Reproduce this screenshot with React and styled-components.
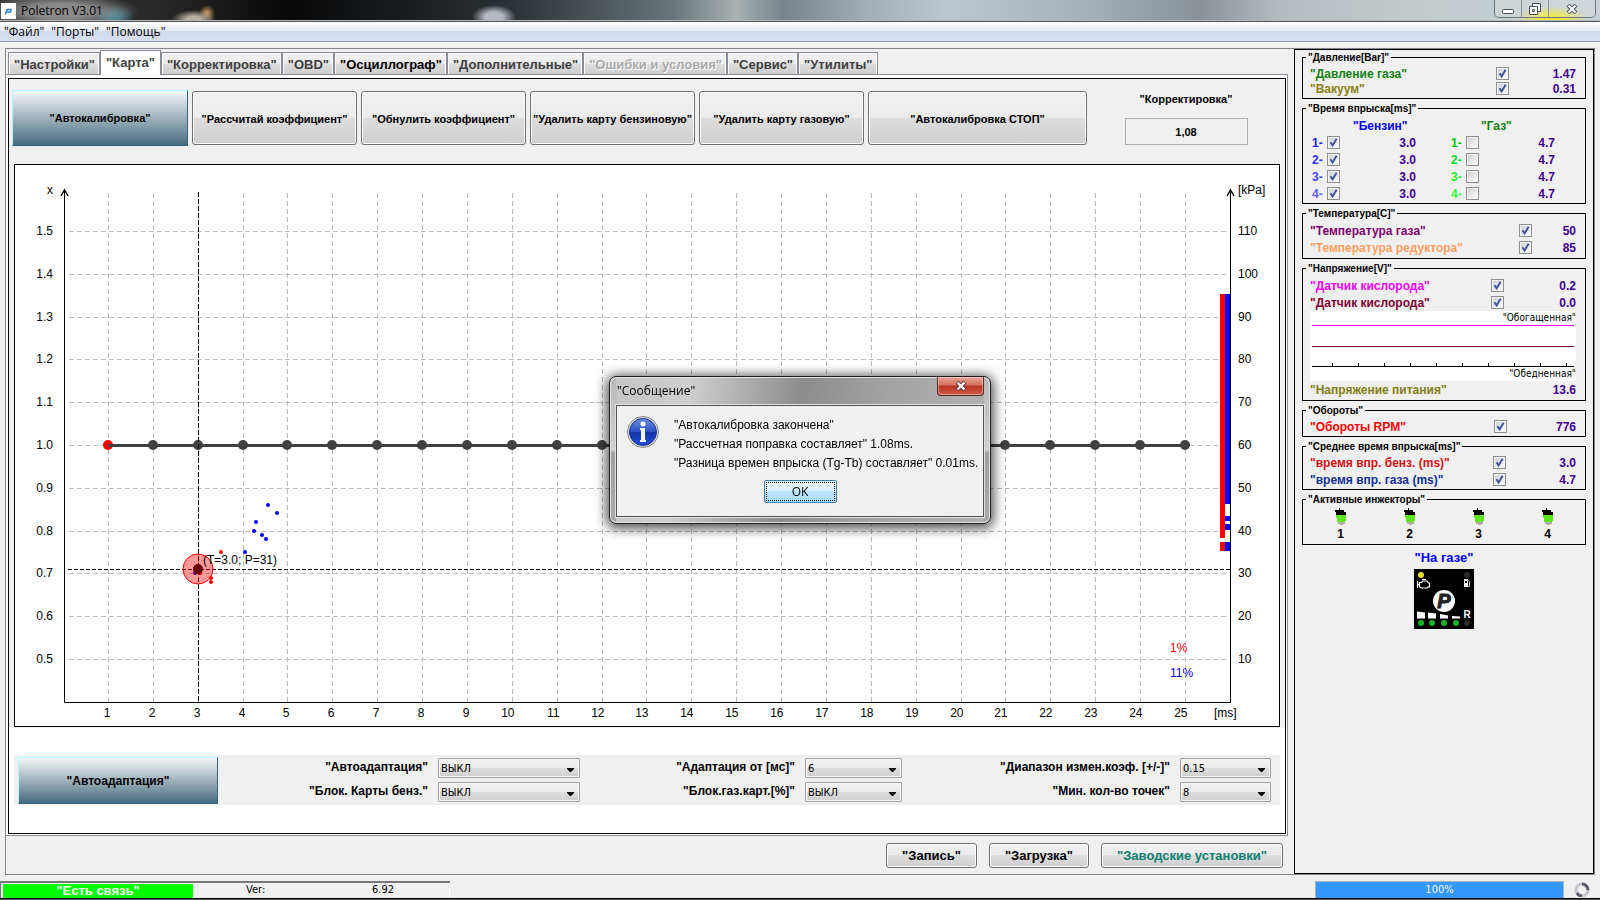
import React, { useState } from "react";
import styled, { createGlobalStyle, css } from "styled-components";

const UI_FONT = '"Liberation Sans", Arial, sans-serif';
const SYSTEM_FONT = '"Open Sans", "Noto Sans", sans-serif';
const TAHOMA = '"DejaVu Sans Condensed", "DejaVu Sans", sans-serif';

const tabs = [
  { title: "Настройки" },
  { title: "Карта", active: true },
  { title: "Корректировка" },
  { title: "OBD" },
  { title: "Осциллограф", strong: true },
  { title: "Дополнительные" },
  { title: "Ошибки и условия", disabled: true },
  { title: "Сервис" },
  { title: "Утилиты" },
];

const actions = [
  "Рассчитай коэффициент",
  "Обнулить коэффициент",
  "Удалить карту бензиновую",
  "Удалить карту газовую",
  "Автокалибровка СТОП",
];

const settings = [
  [
    { id: "adapt", label: "Автоадаптация", value: "ВЫКЛ" },
    { id: "lock-petrol", label: "Блок. Карты бенз.", value: "ВЫКЛ" },
  ],
  [
    { id: "adapt-from", label: "Адаптация от [мс]", value: "6" },
    { id: "lock-gas", label: "Блок.газ.карт.[%]", value: "ВЫКЛ" },
  ],
  [
    { id: "range", label: "Диапазон измен.коэф. [+/-]", value: "0.15" },
    { id: "min-points", label: "Мин. кол-во точек", value: "8" },
  ],
];
const selectWidths = [142, 97, 91];

const petrol = ["#1a1aff", "#3333ff", "#4646ff", "#6060ff"];
const gas = ["#00c800", "#00dc28", "#14f01e", "#32ff32"];

// chart scales
const xAt = (ms) => Math.round(93 + 44.87 * (ms - 1)) + 0.5;
const yAt = (k) => Math.round(280 + (1 - k) * 428) + 0.5;
const msTicks = Array.from({ length: 25 }, (_, i) => i + 1);
const rows = Array.from({ length: 11 }, (_, i) => ({
  k: (15 - i) / 10,
  kpa: 110 - i * 10,
}));
const bluePoints = [
  [253, 340],
  [262, 348],
  [241, 357],
  [239, 366],
  [247, 370],
  [251, 374],
  [230, 387],
  [180, 408],
];
const redPoints = [
  [206, 387],
  [185, 408],
  [196, 413],
  [196, 417],
];

const q = (text) => `"${text}"`;

const Tick = ({ id, on }) => {
  const [checked, setChecked] = useState(on);
  return (
    <TickBox>
      <TickInput
        id={id}
        type="checkbox"
        checked={checked}
        onChange={() => setChecked(!checked)}
      />
      {checked && (
        <svg width="13" height="13" viewBox="0 0 13 13" aria-hidden="true">
          <path
            d="M3.5 6.2 L5.6 9.4 L9.6 2.8"
            fill="none"
            stroke="#42559a"
            strokeWidth="2"
          />
        </svg>
      )}
    </TickBox>
  );
};

const Reading = ({ id, label, color, value, valueWidth, check = true }) => (
  <ReadingRow $valueWidth={valueWidth}>
    <ReadingLabel as={check ? "label" : "span"} htmlFor={check ? id : undefined} $color={color}>
      {q(label)}
    </ReadingLabel>
    {check ? <Tick id={id} on /> : <span />}
    <Value>{value}</Value>
  </ReadingRow>
);

const Chart = () => (
  <ChartSvg viewBox="0 0 1264 561" role="img" aria-label="Карта">
    <g stroke="#bcbcbc" strokeDasharray="5 3">
      {rows.map(({ k }) => (
        <line key={k} x1="54" x2="1211" y1={yAt(k)} y2={yAt(k)} />
      ))}
      {msTicks.map((ms) => (
        <line key={ms} x1={xAt(ms)} x2={xAt(ms)} y1="28" y2="537" />
      ))}
    </g>

    <g fill="none" stroke="#000">
      <path d="M49.5 25 V537.5 H1215.5 V25" />
      <path d="M46 31 L49.5 25 L53 31 M1212 31 L1215.5 25 L1219 31" strokeWidth="1.4" />
    </g>

    <g fill="#000">
      <text x="38" y="29" textAnchor="end">x</text>
      <text x="1223" y="29">[kPa]</text>
      {rows.map(({ k, kpa }) => (
        <React.Fragment key={k}>
          <text x="38" y={yAt(k) + 3} textAnchor="end">{k.toFixed(1)}</text>
          <text x="1223" y={yAt(k) + 3}>{kpa}</text>
        </React.Fragment>
      ))}
      {msTicks.map((ms) => (
        <text key={ms} x={xAt(ms) + 2} y="552" textAnchor="end">{ms}</text>
      ))}
      <text x="1199" y="552">[ms]</text>
    </g>
    <text x="1155" y="487" fill="#f00">1%</text>
    <text x="1155" y="512" fill="#00f">11%</text>

    <circle cx={xAt(1) - 0.5} cy={yAt(1) - 0.5} r="5" fill="#f00" />
    <line x1={xAt(1)} x2={xAt(25)} y1={yAt(1)} y2={yAt(1)} stroke="#404040" strokeWidth="3" />
    {msTicks.slice(1).map((ms) => (
      <circle key={ms} cx={xAt(ms) - 0.5} cy={yAt(1) - 0.5} r="5" fill="#404040" />
    ))}

    {/* gas and petrol pressure coverage */}
    <rect x="1205" y="129" width="10" height="257" fill="#fff" />
    <path d="M1205 129h5v244h-5z M1205 377h5v9h-5z" fill="#f00" />
    <path
      d="M1210 129h5v210h-5z M1210 351h5v5h-5z M1210 359h5v6h-5z M1210 377h5v9h-5z"
      fill="#00f"
    />

    {bluePoints.map(([x, y]) => (
      <circle key={`${x}-${y}`} cx={x} cy={y} r="2" fill="#00f" />
    ))}
    {redPoints.map(([x, y]) => (
      <circle key={`${x}-${y}`} cx={x} cy={y} r="2" fill="#f00" />
    ))}

    <path d={`M${xAt(3)} 27 V537`} stroke="#000" strokeDasharray="5 2" />
    <path d="M53 404.5 H1215" stroke="#000" strokeDasharray="4 2" />
    <circle cx="183" cy="404" r="15" fill="#f00" fillOpacity="0.4" stroke="#f00" />
    <circle cx="183" cy="404" r="5" fill="#600" />
    <text x="188" y="399" fill="#000">(T=3.0; P=31)</text>
  </ChartSvg>
);

const Oxygen = () => (
  <OxygenBox>
    <TraceLabel>{q("Обогащенная")}</TraceLabel>
    <TraceSvg viewBox="0 0 262 42" preserveAspectRatio="none" aria-hidden="true">
      <path d="M0 .5H262" stroke="#f0f" />
      <path d="M0 21.5H262" stroke="#700030" />
      <path d="M0 41.5H262" stroke="#000" />
      {Array.from({ length: 10 }, (_, i) => (
        <path key={i} d={`M${20.5 + i * 26} 38V41`} stroke="#000" />
      ))}
    </TraceSvg>
    <TraceLabel>{q("Обедненная")}</TraceLabel>
  </OxygenBox>
);

const Injector = () => (
  <svg width="12" height="18" viewBox="0 0 12 18" aria-hidden="true">
    <path d="M4 0h1v2h4v2h2v3H1V4H0V2h4z" fill="#000" />
    <path d="M1 7h10v6h-1v1H2v-4H1z" fill="#5fe61e" />
    <path d="M3 14h7v2H8v1H5v-1H3z" fill="#b4a8a8" />
  </svg>
);

const Lamp = () => (
  <svg width="60" height="60" viewBox="0 0 60 60" role="img" aria-label="Переключатель">
    <rect width="60" height="60" fill="#000" />
    <circle cx="7" cy="6" r="3" fill="#e6e02a" />
    <circle cx="53" cy="6" r="3" fill="#2a2a2a" />
    <path
      d="M3.500 12V19M3.500 15.500H5.500M5.500 18V13.500H7.500L9 12H13L14.500 14H15.500V18H14L13 19H7.500L5.500 18M8 10.500H12"
      fill="none"
      stroke="#fff"
      strokeWidth="1.200"
    />
    <path d="M50 10h4v8h-4z" fill="#eee" />
    <path d="M51 12h2v2h-2z" fill="#000" />
    <path d="M54.500 11L55.500 12.500V17.500H54" fill="none" stroke="#bbb" />
    <circle cx="30" cy="32" r="11" fill="#fff" />
    <LogoText x="30" y="39" textAnchor="middle">P</LogoText>
    <path d="M3 42.500l8 1v6H3z M14 43.500l8 1v5h-8z M26 45l8 1.500v3h-8z M38 47l8 .5v2h-8z" fill="#fff" />
    <ReserveText x="53" y="49" textAnchor="middle">R</ReserveText>
    {[7, 18, 30, 42].map((cx) => (
      <circle key={cx} cx={cx} cy="54" r="3" fill="#14b428" />
    ))}
    <circle cx="53" cy="54" r="3" fill="#2a2a2a" />
  </svg>
);

const Message = ({ onClose }) => (
  <Dialog role="dialog" aria-labelledby="message-title">
    <DialogHead>
      <DialogTitle id="message-title">{q("Сообщение")}</DialogTitle>
      <DialogClose type="button" aria-label="Закрыть" onClick={onClose}>
        <svg width="12" height="10" viewBox="0 0 12 10">
          <path d="M2 1L10 9M10 1L2 9" stroke="#54323a" strokeWidth="4" />
          <path d="M2.500 1.500L9.500 8.500M9.500 1.500L2.500 8.500" stroke="#fff" strokeWidth="2.400" />
        </svg>
      </DialogClose>
    </DialogHead>
    <DialogBody>
      <svg width="32" height="32" viewBox="0 0 32 32" aria-hidden="true">
        <defs>
          <linearGradient id="info" x1="0" y1="0" x2="0" y2="1">
            <stop offset="0" stopColor="#6d8ede" />
            <stop offset="0.5" stopColor="#2a50c4" />
            <stop offset="0.52" stopColor="#1234a4" />
            <stop offset="1" stopColor="#2450d8" />
          </linearGradient>
        </defs>
        <circle cx="16" cy="16" r="15.500" fill="#ddd" stroke="#888" />
        <circle cx="16" cy="16" r="13.500" fill="url(#info)" stroke="#1a3590" />
        <circle cx="16" cy="8" r="2.500" fill="#fff" />
        <path d="M13 12h5v12h1v2h-6v-2h1V14h-1z" fill="#f2f2f2" />
      </svg>
      <div>
        <DialogLine>{q("Автокалибровка закончена")}</DialogLine>
        <DialogLine>{q("Рассчетная поправка составляет")} 1.08ms.</DialogLine>
        <DialogLine>{q("Разница времен впрыска (Tg-Tb) составляет")} 0.01ms.</DialogLine>
      </div>
      <OkButton type="button" onClick={onClose}>
        <span>OK</span>
      </OkButton>
    </DialogBody>
  </Dialog>
);

const App = () => {
  const [messageOpen, setMessageOpen] = useState(true);

  return (
    <>
      <GlobalStyle />
      <Window>
        <TitleBar>
          <AppIcon>
            <svg width="9" height="7" viewBox="0 0 9 7" aria-hidden="true">
              <path d="M1.500 6.500L3 1.500H7L6.500 4H3" fill="none" stroke="#2583dc" strokeWidth="1.500" />
            </svg>
          </AppIcon>
          <WindowTitle>Poletron V3.01</WindowTitle>
          <WindowButtons>
            <WindowButton type="button" aria-label="Свернуть">
              <svg width="14" height="12" viewBox="0 0 14 12">
                <rect x="1.500" y="6.500" width="11" height="4" rx="1" fill="#fff" stroke="#4a4f5c" />
              </svg>
            </WindowButton>
            <WindowButton type="button" aria-label="Восстановить">
              <svg width="14" height="12" viewBox="0 0 14 12">
                <path d="M4.500 .5h8v8h-8z" fill="#fff" stroke="#4a4f5c" />
                <path d="M1.500 3.500h8v8h-8z" fill="#fff" stroke="#4a4f5c" />
                <path d="M4.500 6.500h2v2h-2z" fill="#ddd" stroke="#4a4f5c" />
              </svg>
            </WindowButton>
            <WindowButton type="button" aria-label="Закрыть окно" $wide>
              <svg width="12" height="10" viewBox="0 0 12 10">
                <path d="M2 1L10 9M10 1L2 9" stroke="#4a4f5c" strokeWidth="4" />
                <path d="M2.500 1.500L9.500 8.500M9.500 1.500L2.500 8.500" stroke="#fff" strokeWidth="2" />
              </svg>
            </WindowButton>
          </WindowButtons>
        </TitleBar>

        <MenuBar>
          {["Файл", "Порты", "Помощь"].map((item) => (
            <MenuItem key={item} type="button">{q(item)}</MenuItem>
          ))}
        </MenuBar>

        <Workspace>
          <Main>
            <TabList role="tablist">
              {tabs.map(({ title, active, strong, disabled }) => (
                <Tab
                  key={title}
                  type="button"
                  role="tab"
                  aria-selected={!!active}
                  disabled={disabled}
                  $active={active}
                  $strong={strong}
                >
                  {q(title)}
                </Tab>
              ))}
            </TabList>

            <TabPanel>
              <MapPage>
                <MapTop>
                  <Toolbar>
                    <ToggleButton type="button">{q("Автокалибровка")}</ToggleButton>
                    {actions.map((action) => (
                      <ActionButton key={action} type="button">{q(action)}</ActionButton>
                    ))}
                    <Correction>
                      <label htmlFor="correction">{q("Корректировка")}</label>
                      <CorrectionInput id="correction" defaultValue="1,08" />
                    </Correction>
                  </Toolbar>
                  <ChartFrame>
                    <Chart />
                  </ChartFrame>
                </MapTop>

                <Settings>
                  <ToggleButton type="button" $large>{q("Автоадаптация")}</ToggleButton>
                  {settings.map((group, i) => (
                    <SettingsGroup key={group[0].id} $selectWidth={selectWidths[i]}>
                      {group.map(({ id, label, value }) => (
                        <React.Fragment key={id}>
                          <SettingLabel htmlFor={id}>{q(label)}</SettingLabel>
                          <SelectWrap>
                            <Select id={id} defaultValue={value}>
                              <option>{value}</option>
                            </Select>
                            <svg width="7" height="4" viewBox="0 0 7 4" aria-hidden="true">
                              <path d="M0 0h7v1L4 4H3L0 1z" fill="#000" />
                            </svg>
                          </SelectWrap>
                        </React.Fragment>
                      ))}
                    </SettingsGroup>
                  ))}
                </Settings>
              </MapPage>
            </TabPanel>

            <Footer>
              <FooterButton type="button">{q("Запись")}</FooterButton>
              <FooterButton type="button">{q("Загрузка")}</FooterButton>
              <FooterButton type="button" $color="#108070">{q("Заводские установки")}</FooterButton>
            </Footer>
          </Main>

          <Side>
            <Group>
              <Legend>{q("Давление[Bar]")}</Legend>
              <Readings $rowHeight={15}>
                <Reading id="gas-pressure" label="Давление газа" color="#108010" value="1.47" valueWidth={67} />
                <Reading id="vacuum" label="Вакуум" color="#8a8010" value="0.31" valueWidth={67} />
              </Readings>
            </Group>

            <Group>
              <Legend>{q("Время впрыска[ms]")}</Legend>
              <InjectionHead>
                <ReadingLabel $color="#0000ff">{q("Бензин")}</ReadingLabel>
                <ReadingLabel $color="#108010">{q("Газ")}</ReadingLabel>
              </InjectionHead>
              <Injection>
                {[0, 1, 2, 3].map((i) => (
                  <React.Fragment key={i}>
                    <Channel>
                      <ReadingLabel as="label" htmlFor={`petrol-${i}`} $color={petrol[i]}>{i + 1}-</ReadingLabel>
                      <Tick id={`petrol-${i}`} on />
                      <Value>3.0</Value>
                    </Channel>
                    <Channel>
                      <ReadingLabel as="label" htmlFor={`gas-${i}`} $color={gas[i]}>{i + 1}-</ReadingLabel>
                      <Tick id={`gas-${i}`} on={false} />
                      <Value>4.7</Value>
                    </Channel>
                  </React.Fragment>
                ))}
              </Injection>
            </Group>

            <Group>
              <Legend>{q("Температура[C]")}</Legend>
              <Readings>
                <Reading id="gas-temp" label="Температура газа" color="#800070" value="50" valueWidth={44} />
                <Reading id="reducer-temp" label="Температура редуктора" color="#ffa060" value="85" valueWidth={44} />
              </Readings>
            </Group>

            <Group>
              <Legend>{q("Напряжение[V]")}</Legend>
              <Readings>
                <Reading id="oxygen-1" label="Датчик кислорода" color="#ff00ff" value="0.2" valueWidth={72} />
                <Reading id="oxygen-2" label="Датчик кислорода" color="#800030" value="0.0" valueWidth={72} />
                <Oxygen />
                <Reading label="Напряжение питания" color="#808010" value="13.6" valueWidth={72} check={false} />
              </Readings>
            </Group>

            <Group>
              <Legend>{q("Обороты")}</Legend>
              <Readings $tight>
                <Reading id="rpm" label="Обороты RPM" color="#ff0000" value="776" valueWidth={69} />
              </Readings>
            </Group>

            <Group>
              <Legend>{q("Среднее время впрыска[ms]")}</Legend>
              <Readings $tight>
                <Reading id="avg-petrol" label="время впр. бенз. (ms)" color="#d01010" value="3.0" valueWidth={70} />
                <Reading id="avg-gas" label="время впр. газа (ms)" color="#103098" value="4.7" valueWidth={70} />
              </Readings>
            </Group>

            <Group>
              <Legend>{q("Активные инжекторы")}</Legend>
              <Injectors>
                {[1, 2, 3, 4].map((n) => (
                  <InjectorItem key={n}>
                    <Injector />
                    {n}
                  </InjectorItem>
                ))}
              </Injectors>
            </Group>

            <FuelMode>
              {q("На газе")}
              <Lamp />
            </FuelMode>
          </Side>
        </Workspace>

        <StatusBar>
          <StatusLeft>
            <Connection>{q("Есть связь")}</Connection>
            <span>Ver:</span>
            <span>6.92</span>
          </StatusLeft>
          <ProgressBox role="progressbar" aria-label="Загрузка данных" aria-valuenow={100}>
            100%
          </ProgressBox>
          <svg width="16" height="16" viewBox="0 0 16 16" aria-hidden="true">
            <circle cx="8" cy="9" r="6" fill="none" stroke="#c4c4cc" strokeWidth="3" />
            <path d="M8 3A6 6 0 0 1 14 9M3 12A6 6 0 0 0 8 15" fill="none" stroke="#5c5c6c" strokeWidth="3" />
          </svg>
        </StatusBar>
      </Window>

      {messageOpen && <Message onClose={() => setMessageOpen(false)} />}
    </>
  );
};

export default App;

const GlobalStyle = createGlobalStyle`
  * {
    box-sizing: border-box;
  }
  body {
    margin: 0;
    background: #f0f0f0;
    font-family: ${UI_FONT};
    color: #000;
  }
  button,
  input,
  select {
    margin: 0;
    color: inherit;
    font-family: inherit;
  }
`;

const Window = styled.div`
  display: flex;
  flex-direction: column;
  min-width: 1400px;
  min-height: 100vh;
  border-bottom: 2px groove #555;
`;

const TitleBar = styled.header`
  display: flex;
  align-items: flex-start;
  height: 22px;
  padding-left: 1px;
  border-bottom: 1px solid #50555a;
  box-shadow: inset 0 -1px #b4b8bc;
  background:
    radial-gradient(ellipse 40px 14px at 97% 90%, #f0e838 20%, transparent 90%),
    radial-gradient(ellipse 80px 18px at 60px 11px, #969696e0 40%, transparent),
    radial-gradient(ellipse 20px 12px at 114px 17px, #3c7c8c 30%, transparent),
    radial-gradient(ellipse 22px 9px at 194px 19px, #b8b0a0 30%, transparent),
    radial-gradient(circle 8px at 207px 13px, #b08858 20%, transparent),
    radial-gradient(ellipse 22px 12px at 494px 17px, #b4b8c0 40%, transparent),
    linear-gradient(
      90deg,
      #303030 0,
      #282828 10%,
      #080808 18%,
      #16181a 24%,
      #2c3236 32%,
      #444c50 36%,
      #6a7478 42%,
      #a8b0b2 46%,
      #78848a 49%,
      #a2acb2 54%,
      #bcc6ce 59%,
      #a8b4bc 67%,
      #98a2a8 71%,
      #8a9298 75%,
      #b4bcc0 80%,
      #c2cacc 88%,
      #c8d2d6 100%
    );
`;

const AppIcon = styled.span`
  display: grid;
  place-items: center;
  width: 15px;
  height: 16px;
  margin-top: 3px;
  background: #fff;
`;

const WindowTitle = styled.span`
  margin-left: 5px;
  font: 12px/21px ${SYSTEM_FONT};
`;

const WindowButtons = styled.div`
  display: flex;
  height: 18px;
  margin: 0 4px 0 auto;
  border: 1px solid #6c757c;
  border-top: 0;
  border-radius: 0 0 5px 5px;
`;

const WindowButton = styled.button`
  display: grid;
  place-items: center;
  width: ${(p) => (p.$wide ? 46 : 27)}px;
  padding: 0;
  border: 0;
  border-right: ${(p) => (p.$wide ? 0 : "1px solid #8c959c")};
  background: #ffffff20;
`;

const MenuBar = styled.nav`
  display: flex;
  gap: 7px;
  height: 20px;
  padding-left: 4px;
  border-bottom: 1px solid #9298ac;
  background: linear-gradient(#fff, #e6eaf6 45%, #d4daee 50%, #d8def0);
  box-shadow: 0 2px #fafafa;
`;

const MenuItem = styled.button`
  padding: 0;
  border: 0;
  background: none;
  font: 12px/19px ${SYSTEM_FONT};
`;

const Workspace = styled.div`
  display: flex;
  flex: 1;
  gap: 6px;
  margin: 6px 5px;
  border: 1px solid #828790;
`;

const Main = styled.main`
  display: flex;
  flex: 1;
  flex-direction: column;
  min-width: 0;
  padding-top: 3px;
`;

const TabList = styled.div`
  display: flex;
  height: 22px;
  padding-left: 2px;
`;

const Tab = styled.button`
  padding: 3px 4px 0 5px;
  border: 1px solid #898c95;
  border-bottom: 0;
  background: linear-gradient(#f2f2f2, #ebebeb 50%, #dcdcdc 52%, #cfcfcf);
  box-shadow: inset 1px 1px #fafafa, inset -1px 0 #fafafa;
  font-size: 13px;
  font-weight: bold;
  line-height: 16px;
  white-space: nowrap;
  color: ${(p) => (p.$strong ? "#000" : "#404040")};

  &:disabled {
    color: #aaa;
    text-shadow: 1px 1px #fff;
  }

  ${(p) =>
    p.$active &&
    css`
      position: relative;
      height: 25px;
      margin-top: -2px;
      padding: 0 5px;
      background: #fff;
    `}
`;

const TabPanel = styled.section`
  display: flex;
  flex: 1;
  padding: 3px 1px 1px 2px;
  border: solid #898c95;
  border-width: 1px 1px 1px 0;
  background: #fff;
`;

const MapPage = styled.div`
  flex: 1;
  min-width: 0;
  border: 1px solid #000;
`;

const MapTop = styled.div`
  padding-bottom: 1px;
  background: #f0f0f0;
`;

const Toolbar = styled.div`
  display: grid;
  grid-template-columns:
    minmax(0, 176fr) repeat(4, minmax(0, 165fr)) minmax(0, 219fr)
    minmax(0, 194fr);
  gap: 4px;
  height: 85px;
  padding: 12px 0 19px 3px;
`;

const raised = css`
  border: 1px solid #707070;
  border-radius: 3px;
  background: linear-gradient(#f2f2f2, #ebebeb 49%, #dddddd 50%, #cfcfcf);
  box-shadow: inset 0 0 0 1px #fcfcfc;
  white-space: nowrap;
`;

const ActionButton = styled.button`
  ${raised}
  padding: 2px 0 0;
  font-size: 11px;
  font-weight: bold;
`;

const ToggleButton = styled.button`
  margin: ${(p) => (p.$large ? "0" : "-1px 0 -1px")};
  padding: 0;
  border: 1px solid;
  border-color: #b0f8ff #35647a #35647a #b0f8ff;
  background: linear-gradient(#f4f6f6, #9fb2bc 50%, #456c80);
  font-size: ${(p) => (p.$large ? 12 : 11)}px;
  font-weight: bold;
`;

const Correction = styled.div`
  display: flex;
  flex-direction: column;
  align-items: center;
  gap: 10px;
  padding: 0 4px 0 0;
  font-size: 11px;
  font-weight: bold;
  line-height: 17px;
`;

const CorrectionInput = styled.input`
  width: 123px;
  height: 27px;
  border: 1px solid #abadb3;
  background: #f0f0f0;
  font-size: 11px;
  font-weight: bold;
  text-align: center;
`;

const ChartFrame = styled.div`
  margin: 0 5px;
  border: 1px solid #000;
  background: #fff;
`;

const ChartSvg = styled.svg`
  display: block;
  width: 100%;
  height: auto;
  font-family: ${UI_FONT};
  font-size: 12px;
`;

const Settings = styled.div`
  display: grid;
  grid-template-columns: 200px 362fr 322fr 369fr;
  margin: 27px 5px 0;
  padding: 2px 9px 1px 4px;
  background: #f0f0f0;
`;

const SettingsGroup = styled.div`
  display: grid;
  grid-template-columns: 1fr ${(p) => p.$selectWidth}px;
  column-gap: 10px;
  row-gap: 4px;
  padding: 1px 0 2px;
`;

const SettingLabel = styled.label`
  font-size: 12px;
  font-weight: bold;
  line-height: 18px;
  text-align: right;
`;

const SelectWrap = styled.span`
  display: grid;
  align-items: center;

  > * {
    grid-area: 1 / 1;
  }
  > svg {
    justify-self: end;
    margin: 4px 6px 0 0;
    pointer-events: none;
  }
`;

const Select = styled.select`
  appearance: none;
  width: 100%;
  height: 20px;
  padding: 0 2px;
  border: 1px solid #a0a0a4;
  border-radius: 1px;
  background: linear-gradient(#f2f2f2, #ebebeb 49%, #dddddd 50%, #cfcfcf);
  box-shadow: inset 0 0 0 1px #f6f6f6;
  font-family: ${TAHOMA};
  font-size: 11px;
`;

const Footer = styled.div`
  display: flex;
  justify-content: flex-end;
  gap: 12px;
  padding: 7px 5px 6px;
`;

const FooterButton = styled.button`
  ${raised}
  height: 25px;
  padding: 0 15px;
  font-size: 13px;
  font-weight: bold;
  color: ${(p) => p.$color || "#000"};
`;

const Side = styled.aside`
  display: flex;
  flex-direction: column;
  gap: 4px;
  width: 300px;
  padding: 2px 7px;
  border: 1px solid #000;
`;

const Group = styled.fieldset`
  min-width: 0;
  margin: 0;
  padding: 0;
  border: 1px solid #000;
`;

const Legend = styled.legend`
  margin-left: 3px;
  padding: 0 2px;
  font-size: 10px;
  font-weight: bold;
  line-height: 11px;
`;

const Readings = styled.div`
  display: grid;
  grid-auto-rows: minmax(${(p) => p.$rowHeight || 17}px, auto);
  padding: ${(p) => (p.$tight ? "2px 9px 1px 7px" : "3px 9px 2px 7px")};
`;

const ReadingRow = styled.div`
  display: grid;
  grid-template-columns: 1fr 13px ${(p) => p.$valueWidth}px;
  align-items: center;
`;

const ReadingLabel = styled.span`
  padding-top: 2px;
  font-size: 12px;
  font-weight: bold;
  line-height: 13px;
  white-space: nowrap;
  color: ${(p) => p.$color};
`;

const Value = styled.span`
  padding-top: 2px;
  font-size: 12px;
  font-weight: bold;
  line-height: 13px;
  text-align: right;
  color: #400090;
`;

const TickBox = styled.span`
  display: grid;
  width: 13px;
  height: 13px;

  > * {
    grid-area: 1 / 1;
  }
  > svg {
    pointer-events: none;
  }
`;

const TickInput = styled.input`
  appearance: none;
  width: 13px;
  height: 13px;
  border: 1px solid #8e8f8f;
  background: linear-gradient(135deg, #c8ccd2, #f6f6f6 80%);
  box-shadow: inset 0 0 0 1px #f4f4f4;
`;

const InjectionHead = styled.div`
  display: grid;
  grid-template-columns: 128px 1fr;
  padding: 4px 0 1px 50px;
`;

const Injection = styled.div`
  display: grid;
  grid-template-columns: 104px 104px;
  grid-auto-rows: 17px;
  column-gap: 35px;
  padding: 0 0 1px 9px;
`;

const Channel = styled.div`
  display: grid;
  grid-template-columns: 15px 13px 1fr;
  align-items: center;
`;

const OxygenBox = styled.div`
  display: flex;
  flex-direction: column;
  background: #fff;
`;

const TraceLabel = styled.span`
  font: 10px/14px ${TAHOMA};
  text-align: right;
`;

const TraceSvg = styled.svg`
  width: calc(100% - 4px);
  height: 42px;
  margin-left: 2px;
`;

const Injectors = styled.div`
  display: grid;
  grid-template-columns: repeat(4, 1fr);
  padding: 3px;
`;

const InjectorItem = styled.div`
  display: flex;
  flex-direction: column;
  align-items: center;
  gap: 2px;
  font-size: 12px;
  font-weight: bold;
  line-height: 13px;
`;

const FuelMode = styled.div`
  display: flex;
  flex-direction: column;
  align-items: center;
  gap: 3px;
  padding-top: 1px;
  font-size: 13px;
  font-weight: bold;
  line-height: 16px;
  color: #0000ff;
`;

const LogoText = styled.text`
  font: italic bold 20px ${UI_FONT};
  fill: #222;
  stroke: #222;
`;

const ReserveText = styled.text`
  font: bold 10px ${UI_FONT};
  fill: #fff;
`;

const StatusBar = styled.footer`
  display: flex;
  gap: 10px;
  height: 17px;
  padding-right: 10px;
  font: 11px/14px ${TAHOMA};
`;

const StatusLeft = styled.div`
  display: grid;
  grid-template-columns: 190px 73px 1fr;
  column-gap: 53px;
  width: 450px;
  padding: 0 0 0 2px;
  border: solid #777;
  border-width: 2px 0 0 1px;
  box-shadow: inset -1px 0 #fff;
`;

const Connection = styled.span`
  overflow: hidden;
  height: 14px;
  margin-top: 1px;
  background: #00ff00;
  font: bold 13px/14px ${UI_FONT};
  text-align: center;
  color: #fff;
`;

const ProgressBox = styled.div`
  width: 249px;
  margin-left: auto;
  border: 1px solid #b4b4b4;
  border-bottom: 0;
  background: #3399ff;
  line-height: 16px;
  text-align: center;
  color: #f4f4f4;
`;

const Dialog = styled.div`
  position: fixed;
  top: 50%;
  left: 50%;
  width: 382px;
  padding: 0 6px 6px;
  transform: translate(-50%, -50%);
  border: 1px solid #1c1c1c;
  border-radius: 7px;
  background:
    linear-gradient(#b8b8b8 0, #d0d0d0 50%, #a0a0a0 52%, #a8a8a8) left / 6px 100%
      no-repeat,
    linear-gradient(#b8b8b8 0, #d0d0d0 50%, #a0a0a0 52%, #a8a8a8) right / 6px 100%
      no-repeat,
    linear-gradient(100deg, #c4c4c4 0, #cfcfcf 20%, #8c8c8c 48%, #a4a4a4 70%, #b4b4b4 100%);
  box-shadow: inset 0 0 0 1px #e4e4e4, 0 2px 12px 3px #000000a8;
`;

const DialogHead = styled.div`
  display: flex;
  justify-content: space-between;
  height: 28px;
`;

const DialogTitle = styled.h2`
  margin: 0;
  padding-left: 1px;
  font: 12px/28px ${SYSTEM_FONT};
`;

const DialogClose = styled.button`
  display: grid;
  place-items: center;
  width: 47px;
  height: 19px;
  padding: 0;
  border: 1px solid #5a2a24;
  border-top: 0;
  border-radius: 0 0 4px 4px;
  background: linear-gradient(#e6a498, #d4705e 45%, #b8321c 50%, #d0604c);
  box-shadow: inset 0 0 0 1px #ffffff60;
`;

const DialogBody = styled.div`
  display: grid;
  grid-template-columns: 32px minmax(0, 1fr);
  column-gap: 15px;
  padding: 10px 10px 13px;
  border: 1px solid #555;
  background: #f0f0f0;
  box-shadow: 0 0 0 1px #e0e0e0;
`;

const DialogLine = styled.p`
  margin: 0;
  font: 12px/19px ${UI_FONT};
  white-space: nowrap;
`;

const OkButton = styled.button`
  grid-column: 1 / -1;
  justify-self: center;
  width: 73px;
  height: 23px;
  margin-top: 7px;
  padding: 1px;
  border: 1px solid #3c7fb1;
  border-radius: 2px;
  background: linear-gradient(#eaf6fd, #d9f0fc 49%, #bee6fd 50%, #a7d9f5);
  font: 12px/17px ${SYSTEM_FONT};

  > span {
    display: block;
    border: 1px dotted #000;
  }
`;
